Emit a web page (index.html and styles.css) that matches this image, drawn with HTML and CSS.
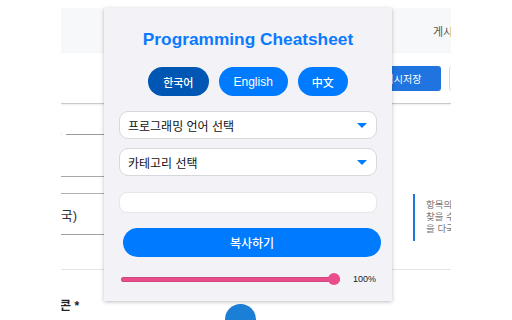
FILE: index.html
```html
<!DOCTYPE html>
<html lang="ko">
<head>
<meta charset="utf-8">
<title>Programming Cheatsheet</title>
<link rel="stylesheet" href="styles.css">
</head>
<body>
<div class="page">
  <div class="topbar"><span class="top-link">게시판으로 돌아가기</span></div>
  <div class="toolbar">
    <button class="btn-save">임시저장</button>
    <button class="btn-outline">미리보기</button>
  </div>
  <div class="content">
    <div class="form">
      <div class="field">
        <div class="legend"><span class="legend-text">이름 *</span><span class="legend-line"></span></div>
        <div class="box"></div>
      </div>
      <div class="field2"><span class="field2-text">언어 (한국)</span></div>
    </div>
    <div class="help">항목의 설명을 입력하세요<br>찾을 수 있도록 작성<br>을 다국어로 입력</div>
  </div>
  <div class="divider"></div>
  <div class="icon-row">
    <span class="icon-label">아이콘 *</span>
    <span class="icon-circle"></span>
  </div>
</div>

<div class="popup">
  <h1 class="title">Programming Cheatsheet</h1>
  <div class="langs">
    <button class="lang active cjk">한국어</button>
    <button class="lang">English</button>
    <button class="lang cjk zh">中文</button>
  </div>
  <div class="select first"><span>프로그래밍 언어 선택</span><span class="caret"></span></div>
  <div class="select second"><span>카테고리 선택</span><span class="caret"></span></div>
  <div class="input"></div>
  <button class="copy">복사하기</button>
  <div class="slider-row">
    <div class="track"><span class="thumb"></span></div>
    <span class="pct">100%</span>
  </div>
</div>
</body>
</html>
```
FILE: styles.css
```css
* { box-sizing: border-box; }
html, body { margin: 0; padding: 0; background: #fff; }
body {
  font-family: "Liberation Sans", "Noto Sans CJK KR", sans-serif;
  width: 512px;
  height: 320px;
  overflow: hidden;
  position: relative;
}
button { font-family: inherit; border: none; cursor: pointer; }

.page {
  width: 390px;
  margin: 8px auto 0;
  height: 312px;
  overflow: hidden;
}
.topbar {
  height: 45px;
  background: #f7f8fa;
  display: flex;
  align-items: center;
  padding-left: 372px;
  white-space: nowrap;
}
.top-link { font-size: 11px; color: #555; }

.toolbar {
  height: 51px;
  display: flex;
  align-items: center;
  padding-left: 304px;
  gap: 8px;
  border-bottom: 1px solid #c9c9c9;
  box-shadow: 0 1px 2px rgba(0,0,0,0.08);
  white-space: nowrap;
}
.btn-save {
  flex: none;
  height: 25px;
  width: 76px;
  background: #1f74e0;
  color: #fff;
  font-size: 10px;
  border-radius: 3px;
}
.btn-outline {
  flex: none;
  height: 25px;
  width: 70px;
  background: #fff;
  border: 1px solid #d8d8d8;
  border-radius: 3px;
  font-size: 10px;
  color: #333;
}

.content { display: flex; gap: 22px; }
.form { width: 330px; flex: none; }
.field { margin-top: 25px; }
.legend { height: 10px; display: flex; align-items: center; gap: 4px; margin-left: -22px; }
.legend-text { font-size: 9px; color: #777; white-space: nowrap; }
.legend-line { flex: 1; height: 1px; background: #9a9a9a; }
.box { height: 38px; border-bottom: 1px solid #a8a8a8; }
.field2 {
  margin-top: 16px;
  height: 42px;
  border-top: 1px solid #b0b0b0;
  border-bottom: 1px solid #a0a0a0;
  display: flex;
  align-items: center;
}
.field2-text { font-size: 13px; color: #333; margin-left: -44px; white-space: nowrap; }

.help {
  margin-top: 90px;
  height: 47px;
  border-left: 2px solid #1f74e0;
  padding: 5px 0 0 11px;
  font-size: 9.5px;
  line-height: 12px;
  color: #777;
  white-space: nowrap;
}
.divider { margin-top: 28px; height: 1px; background: #e4e4e4; }
.icon-row { display: flex; align-items: flex-start; margin-top: 29px; }
.icon-label { font-size: 12px; line-height: 14px; font-weight: 600; color: #222; margin-left: -23px; white-space: nowrap; }
.icon-circle {
  margin-left: 146px;
  margin-top: 5px;
  width: 31px; height: 31px;
  border-radius: 50%;
  background: #1c7fd6;
  flex: none;
}

/* popup */
.popup {
  position: absolute;
  left: 104px;
  top: 8px;
  width: 288px;
  height: 293px;
  background: #f2f2f7;
  box-shadow: 0 1px 4px rgba(0,0,0,0.25);
  padding: 0 15px;
}
.title {
  margin: 20px 0 0;
  font-size: 17.3px;
  line-height: 22px;
  font-weight: bold;
  color: #0a7aff;
  text-align: center;
}
.langs { margin-top: 17px; display: flex; justify-content: center; gap: 10px; }
.lang {
  height: 29px;
  padding: 0 15px;
  border-radius: 15px;
  background: #007aff;
  color: #fff;
  font-size: 12px;
  font-weight: 500;
}
.lang.cjk { font-size: 11px; font-weight: 500; }
.lang.zh { padding: 0 14px; }
.lang.active { background: #0056b3; }

.select {
  height: 28px;
  background: #fff;
  border: 1px solid #d7d7dc;
  border-radius: 9px;
  display: flex;
  align-items: center;
  justify-content: space-between;
  padding: 0 9px 0 8px;
  font-size: 12px;
  color: #111;
}
.select.first { margin-top: 15px; }
.select.second { margin-top: 9px; }
.caret {
  width: 0; height: 0;
  border-left: 5px solid transparent;
  border-right: 5px solid transparent;
  border-top: 5px solid #007aff;
}
.input {
  margin-top: 16px;
  height: 21px;
  background: #fff;
  border: 1px solid #e6e6eb;
  border-radius: 8px;
}
.copy {
  display: block;
  margin: 15px -4px 0 4px;
  width: 100%;
  height: 29px;
  border-radius: 15px;
  background: #007aff;
  color: #fff;
  font-size: 12px;
  font-weight: 500;
}
.slider-row {
  margin: 16px 0 0 2px;
  height: 12px;
  display: flex;
  align-items: center;
  gap: 13px;
}
.track {
  flex: 1;
  height: 5px;
  border-radius: 3px;
  background: #eb4d8c;
  box-shadow: inset 0 0 0 1px rgba(120,60,90,0.25);
  position: relative;
}
.thumb {
  position: absolute;
  right: 0;
  top: -3.5px;
  width: 12px; height: 12px;
  border-radius: 50%;
  background: #eb4d8c;
}
.pct { font-size: 9px; color: #222; width: 24px; }
```
